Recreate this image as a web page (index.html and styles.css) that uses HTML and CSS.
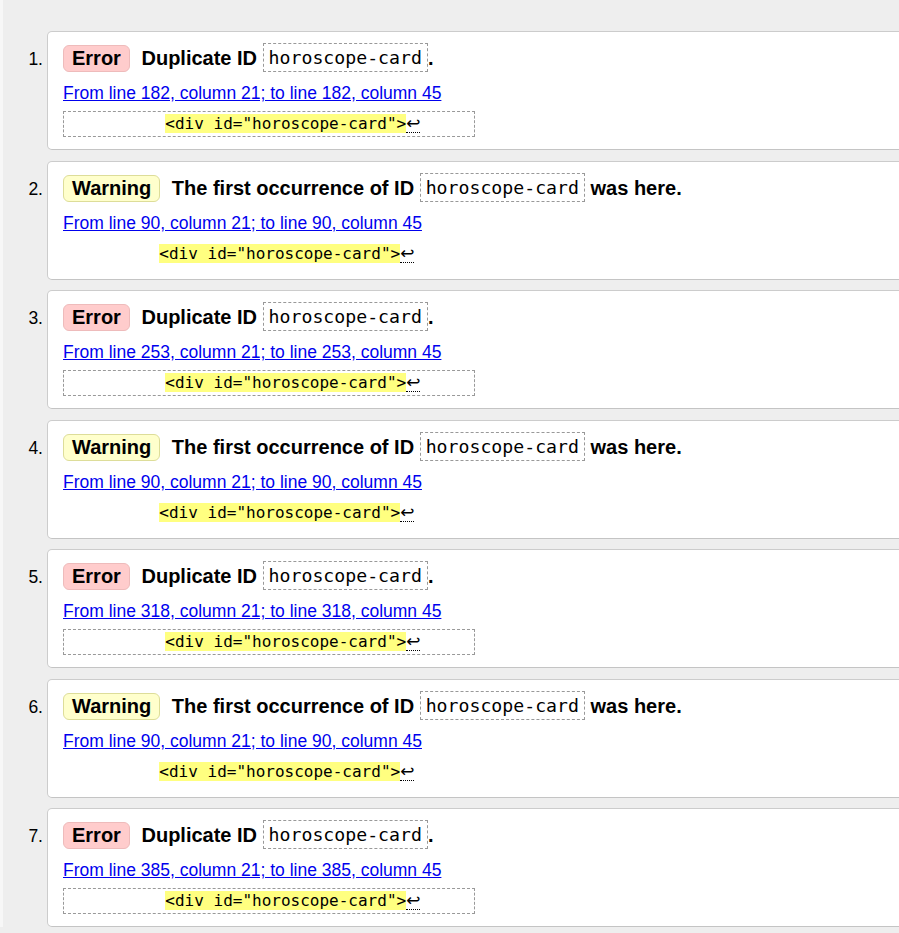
FILE: index.html
```html
<!DOCTYPE html>
<html lang="en">
<head>
<meta charset="utf-8">
<title>Nu Html Checker results</title>
<link rel="stylesheet" href="styles.css">
</head>
<body>
<div class="page">
<ol class="results">
  <li class="item">
    <span class="num">1.</span>
    <div class="card">
      <p class="msg"><span class="badge error">Error</span> <span class="text">Duplicate ID <code class="id">horoscope-card</code>.</span></p>
      <p class="loc"><a href="#l182">From line 182, column 21; to line 182, column 45</a></p>
      <p class="extract boxed"><code>          <b class="hl">&lt;div id="horoscope-card"&gt;</b><span class="lf">↩</span></code></p>
    </div>
  </li>
  <li class="item">
    <span class="num">2.</span>
    <div class="card">
      <p class="msg"><span class="badge warning">Warning</span> <span class="text">The first occurrence of ID <code class="id">horoscope-card</code> was here.</span></p>
      <p class="loc"><a href="#l90">From line 90, column 21; to line 90, column 45</a></p>
      <p class="extract"><code>          <b class="hl">&lt;div id="horoscope-card"&gt;</b><span class="lf">↩</span></code></p>
    </div>
  </li>
  <li class="item">
    <span class="num">3.</span>
    <div class="card">
      <p class="msg"><span class="badge error">Error</span> <span class="text">Duplicate ID <code class="id">horoscope-card</code>.</span></p>
      <p class="loc"><a href="#l253">From line 253, column 21; to line 253, column 45</a></p>
      <p class="extract boxed"><code>          <b class="hl">&lt;div id="horoscope-card"&gt;</b><span class="lf">↩</span></code></p>
    </div>
  </li>
  <li class="item">
    <span class="num">4.</span>
    <div class="card">
      <p class="msg"><span class="badge warning">Warning</span> <span class="text">The first occurrence of ID <code class="id">horoscope-card</code> was here.</span></p>
      <p class="loc"><a href="#l90">From line 90, column 21; to line 90, column 45</a></p>
      <p class="extract"><code>          <b class="hl">&lt;div id="horoscope-card"&gt;</b><span class="lf">↩</span></code></p>
    </div>
  </li>
  <li class="item">
    <span class="num">5.</span>
    <div class="card">
      <p class="msg"><span class="badge error">Error</span> <span class="text">Duplicate ID <code class="id">horoscope-card</code>.</span></p>
      <p class="loc"><a href="#l318">From line 318, column 21; to line 318, column 45</a></p>
      <p class="extract boxed"><code>          <b class="hl">&lt;div id="horoscope-card"&gt;</b><span class="lf">↩</span></code></p>
    </div>
  </li>
  <li class="item">
    <span class="num">6.</span>
    <div class="card">
      <p class="msg"><span class="badge warning">Warning</span> <span class="text">The first occurrence of ID <code class="id">horoscope-card</code> was here.</span></p>
      <p class="loc"><a href="#l90">From line 90, column 21; to line 90, column 45</a></p>
      <p class="extract"><code>          <b class="hl">&lt;div id="horoscope-card"&gt;</b><span class="lf">↩</span></code></p>
    </div>
  </li>
  <li class="item">
    <span class="num">7.</span>
    <div class="card">
      <p class="msg"><span class="badge error">Error</span> <span class="text">Duplicate ID <code class="id">horoscope-card</code>.</span></p>
      <p class="loc"><a href="#l385">From line 385, column 21; to line 385, column 45</a></p>
      <p class="extract boxed"><code>          <b class="hl">&lt;div id="horoscope-card"&gt;</b><span class="lf">↩</span></code></p>
    </div>
  </li>
</ol>
</div>
</body>
</html>
```

FILE: styles.css
```css
html {
  overflow: hidden;
}
body {
  margin: 0;
  background: #eeeeee;
  font-family: "Liberation Sans", Arial, sans-serif;
  color: #000;
}
.page {
  border-left: 3px solid #f7f7f7;
  padding-top: 31px;
}
.results {
  list-style: none;
  margin: 0;
  padding: 0;
}
.item {
  display: flex;
  align-items: baseline;
  margin-bottom: 10.5px;
}
.num {
  width: 40px;
  padding-right: 4px;
  text-align: right;
  font-size: 17.5px;
  flex: none;
}
.card {
  flex: 1;
  margin-right: -40px;
  background: #fff;
  border: 1px solid #cccccc;
  border-bottom-color: #c4c4c4;
  border-radius: 5px;
  padding: 12px 15px 12px 15px;
}
.msg {
  margin: 0;
  font-size: 20px;
  line-height: 29px;
}
.badge {
  display: inline-block;
  font-weight: bold;
  line-height: 21px;
  padding: 2px 8px;
  border-radius: 6px;
  margin-right: 6px;
}
.badge.error {
  background: #ffcccc;
  border: 1px solid #eebbbb;
}
.badge.warning {
  background: #ffffcc;
  border: 1px solid #dddd99;
}
.text {
  font-weight: bold;
}
.id {
  font-family: "DejaVu Sans Mono", monospace;
  font-weight: normal;
  font-size: 18.2px;
  line-height: 21px;
  border: 1px dashed #999999;
  padding: 3px 5px;
  vertical-align: 1px;
}
.loc {
  margin: 10px 0 0 0;
  font-size: 17.5px;
  line-height: 20px;
}
.loc a {
  color: #0000ee;
}
.extract {
  margin: 8px 0 0 0;
  white-space: pre;
  font-family: "DejaVu Sans Mono", monospace;
  font-size: 16px;
  line-height: 24px;
  border-top: 1px solid transparent;
  border-bottom: 1px solid transparent;
}
.extract code {
  font-family: inherit;
}
.extract.boxed {
  border: 1px dashed #999999;
  padding: 0 5px;
  width: 400px;
}
.hl {
  font-weight: normal;
  background: #ffff80;
}
.lf {
  font-family: "DejaVu Sans", sans-serif;
  font-size: 17px;
  border-bottom: 1px dotted #000;
  line-height: 17px;
  display: inline-block;
}
```
